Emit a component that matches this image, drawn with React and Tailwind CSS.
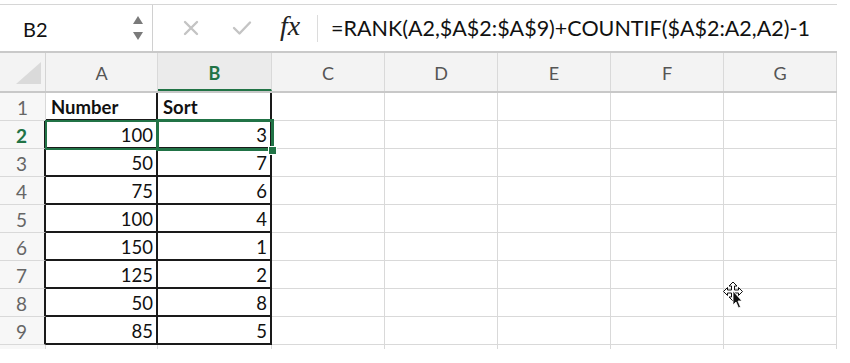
import React from "react";

const rows = [
  ["100", "3"],
  ["50", "7"],
  ["75", "6"],
  ["100", "4"],
  ["150", "1"],
  ["125", "2"],
  ["50", "8"],
  ["85", "5"],
];

const rest = ["C", "D", "E", "F", "G"];

function BlankCells({ last }) {
  return rest.map((c) => (
    <div
      key={c}
      className={`w-[113px] h-full border-r border-[#d9d9d9] ${last ? "" : "border-b"}`}
    />
  ));
}

function FormulaBar() {
  return (
    <div className="h-[49px] flex border-t border-[#d6d6d6] border-b-2 border-b-[#c9c9c9] bg-white">
      <div className="w-[153px] flex items-center justify-between border-r border-[#d0d0d0] pl-[23px] pr-[8px]">
        <span className="text-[20px] text-[#111] font-['Lato',sans-serif] pt-[1px]">B2</span>
        <svg width="12" height="28" viewBox="0 0 12 28">
          <polygon points="6,2 11,10 1,10" fill="#7a7a7a" />
          <polygon points="1,18 11,18 6,26" fill="#7a7a7a" />
        </svg>
      </div>
      <div className="flex items-center">
        <svg className="ml-[30px]" width="16" height="16" viewBox="0 0 16 16">
          <path d="M2 2 L14 14 M14 2 L2 14" stroke="#c4c4c4" strokeWidth="2.4" strokeLinecap="round" />
        </svg>
        <svg className="ml-[33px]" width="20" height="16" viewBox="0 0 20 16">
          <path d="M2 8 L7.5 13.5 L18 2.5" stroke="#c4c4c4" strokeWidth="2.4" fill="none" strokeLinecap="round" strokeLinejoin="round" />
        </svg>
        <span className="ml-[28px] w-[28px] text-[28px] italic text-[#222] font-['Liberation_Serif',serif] leading-none -mt-[4px]">
          fx
        </span>
        <div className="ml-[9px] w-px h-[27px] bg-[#dcdcdc]" />
        <span className="ml-[13px] text-[21.5px] text-[#111] font-['Lato',sans-serif] pt-[1px]">
          =RANK(A2,$A$2:$A$9)+COUNTIF($A$2:A2,A2)-1
        </span>
      </div>
    </div>
  );
}

function Cursor() {
  return (
    <svg
      className="absolute left-[722px] top-[228px]"
      width="26"
      height="30"
      viewBox="0 0 26 30"
    >
      <path
        d="M11 1 L15 5 L12.5 5 L12.5 9 L16.5 9 L16.5 6.5 L20.5 10.5 L16.5 14.5 L16.5 12 L12.5 12 L12.5 16 L15 16 L11 20 L7 16 L9.5 16 L9.5 12 L5.5 12 L5.5 14.5 L1.5 10.5 L5.5 6.5 L5.5 9 L9.5 9 L9.5 5 L7 5 Z"
        fill="#fff"
        stroke="#111"
        strokeWidth="1"
      />
      <path d="M11 10 L11 24 L14 21 L16.5 27 L18.5 26 L16 20 L20 20 Z" fill="#111" stroke="#fff" strokeWidth="0.8" />
    </svg>
  );
}

export default function App() {
  return (
    <div className="w-[850px] h-[363px] bg-white overflow-hidden font-['Lato',sans-serif]">
      <div className="w-[837px] pt-[4px]">
        <FormulaBar />

        <div className="relative">
          {/* column headers */}
          <div className="flex h-[40px] bg-[#f3f3f3] border-b-2 border-[#c8c8c8] text-[18px] text-[#555]">
            <div className="w-[46px] h-full border-r border-[#d4d4d4] flex items-end justify-end pr-[3px] pb-[5px]">
              <svg width="26" height="24" viewBox="0 0 26 24">
                <polygon points="0,22 25,22 25,0" fill="#dadada" />
              </svg>
            </div>
            <div className="w-[112px] h-full border-r border-[#d9d9d9] flex items-center justify-center pt-[3px]">
              A
            </div>
            <div className="w-[114px] h-full border-r border-[#d9d9d9] border-b-2 border-b-[#217346] bg-[#ebebeb] flex items-center justify-center font-bold text-[#217346] pt-[4px]">
              B
            </div>
            {rest.map((c) => (
              <div
                key={c}
                className="w-[113px] h-full border-r border-[#d9d9d9] flex items-center justify-center pt-[3px]"
              >
                {c}
              </div>
            ))}
          </div>

          {/* row 1 */}
          <div className="flex h-[28px] text-[18.5px] text-[#111]">
            <div className="w-[46px] h-full bg-[#f7f7f7] border-r border-b border-[#d9d9d9] flex items-center justify-center text-[#666] text-[19px] pt-[3px]">
              1
            </div>
            <div className="w-[112px] h-full border-r-2 border-b-2 border-[#1a1a1a] flex items-center pl-[5px] font-bold pt-[3px]">
              Number
            </div>
            <div className="w-[114px] h-full border-r-2 border-b-2 border-[#1a1a1a] flex items-center pl-[5px] font-bold pt-[3px]">
              Sort
            </div>
            <BlankCells />
          </div>

          {/* data rows */}
          {rows.map(([a, b], i) => {
            const n = i + 2;
            const sel = n === 2;
            return (
              <div key={n} className="flex h-[28px] text-[18.5px] text-[#111]">
                <div
                  className={`w-[46px] h-full bg-[#f7f7f7] border-r-2 border-r-[#1a1a1a] border-b border-b-[#d9d9d9] flex items-center justify-center pr-[1px] pt-[3px] text-[19px] ${
                    sel ? "font-bold text-[#217346]" : "text-[#666]"
                  }`}
                >
                  {n}
                </div>
                <div className="w-[112px] h-full border-r-2 border-b-2 border-[#1a1a1a] flex items-center justify-end pr-[3px] pt-[3px]">
                  {a}
                </div>
                <div className="w-[114px] h-full border-r-2 border-b-2 border-[#1a1a1a] flex items-center justify-end pr-[3px] pt-[3px]">
                  {b}
                </div>
                <BlankCells />
              </div>
            );
          })}

          {/* cut-off row */}
          <div className="flex h-[4px]">
            <div className="w-[46px] h-full bg-[#f7f7f7] border-r border-[#d9d9d9]" />
            <div className="w-[112px] h-full border-r border-[#d9d9d9]" />
            <div className="w-[114px] h-full border-r border-[#d9d9d9]" />
            <BlankCells last />
          </div>

          {/* selection overlays */}
          <div className="absolute left-[45px] top-[67px] w-[114px] h-[30px] border-2 border-[#217346]" />
          <div className="absolute left-[156px] top-[66px] w-[118px] h-[32px] border-[3px] border-[#217346]" />
          <div className="absolute left-[268px] top-[93px] w-[9px] h-[9px] bg-[#217346] border border-white" />

          <Cursor />
        </div>
      </div>
    </div>
  );
}
